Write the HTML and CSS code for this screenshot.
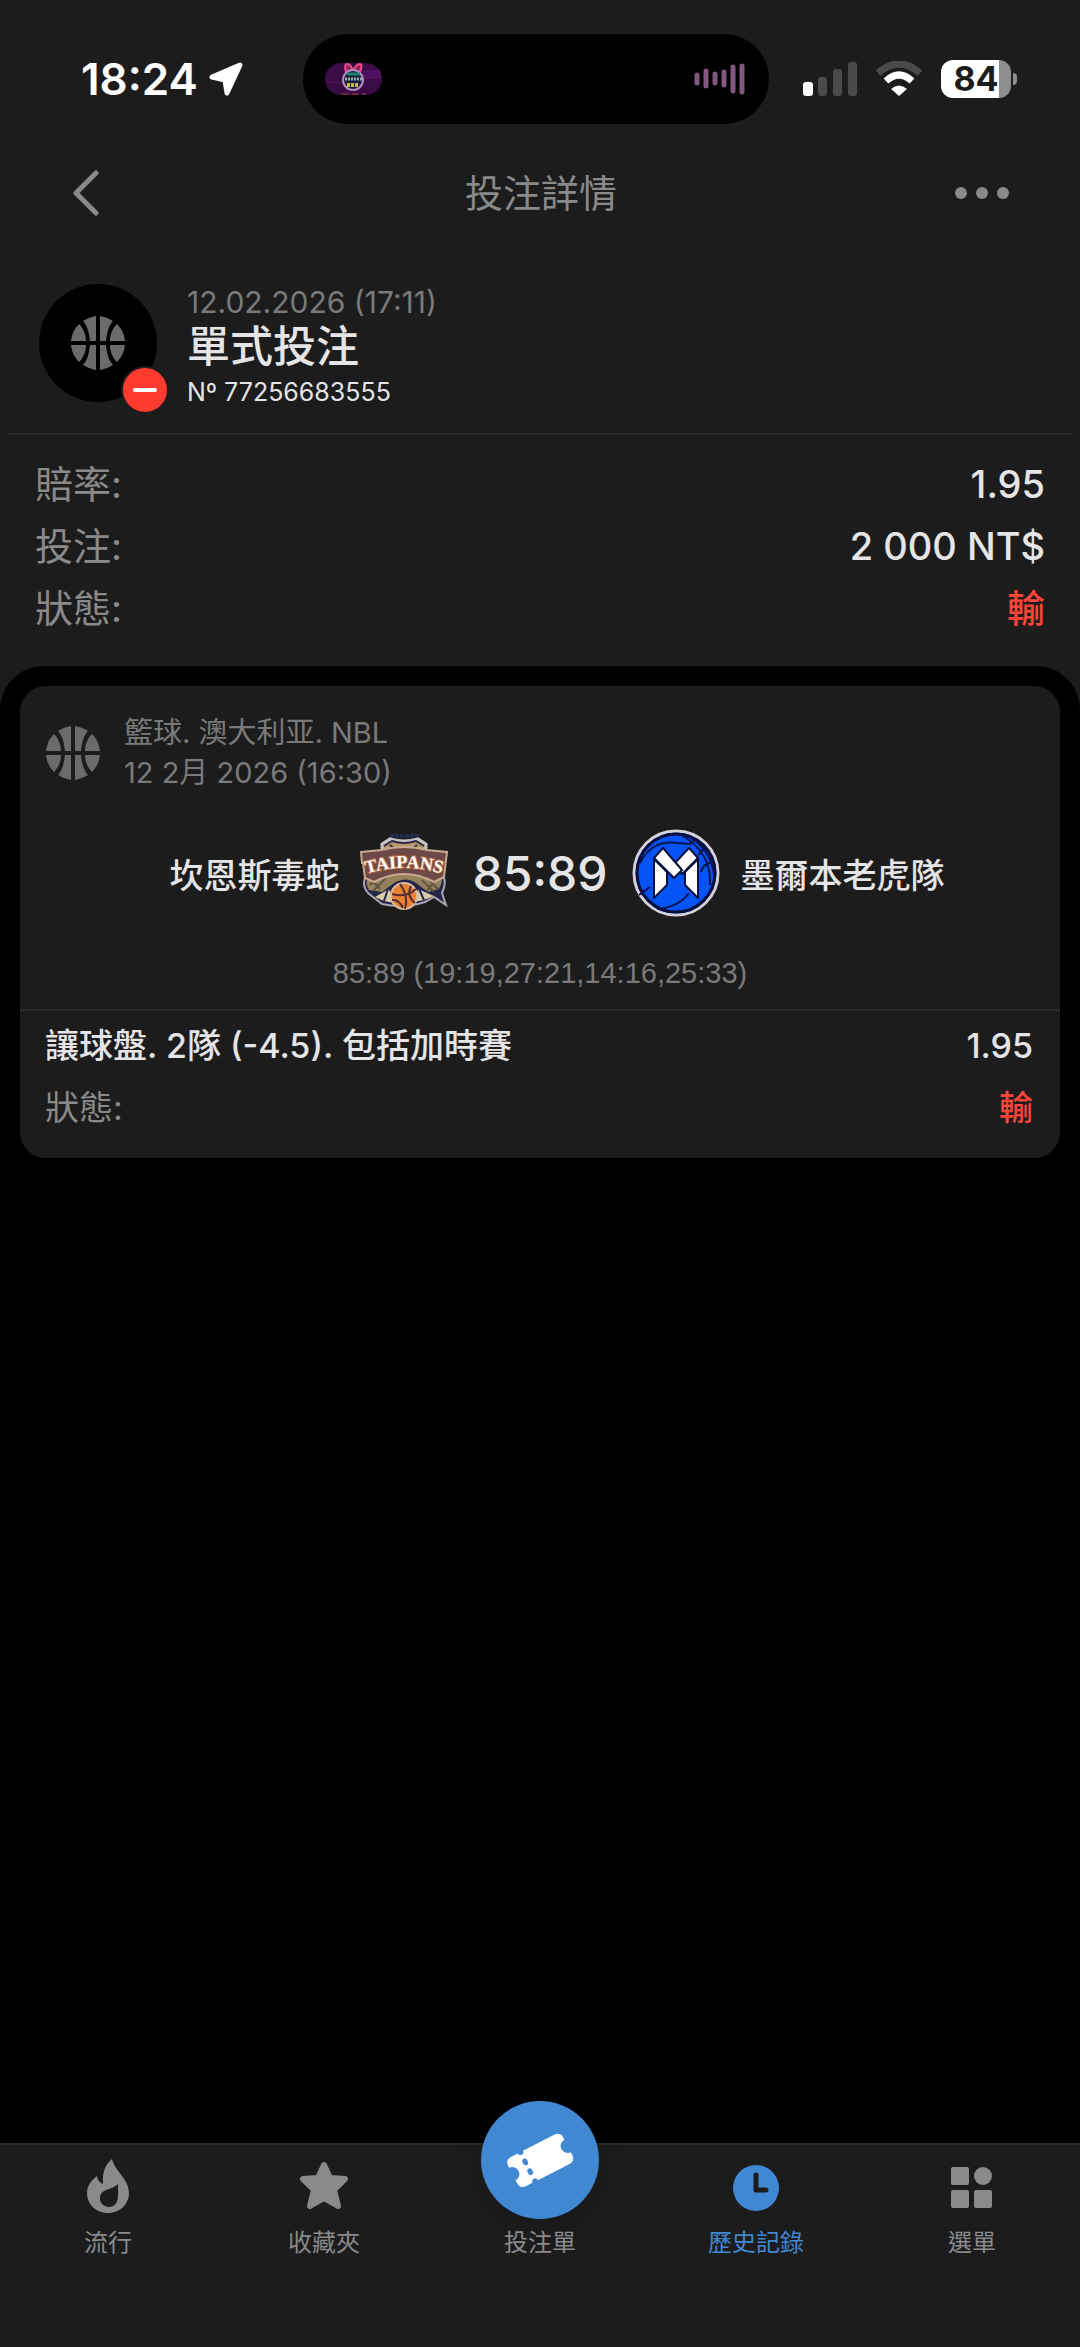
FILE: index.html
```html
<!DOCTYPE html>
<html lang="zh-Hant">
<head>
    <meta charset="UTF-8">
    <meta name="viewport" content="width=device-width, initial-scale=1">
    <title>投注詳情</title>
    <link rel="stylesheet" href="styles.css">
</head>

<body>
    <!-- 共用圖示 -->
    <svg class="sprite" aria-hidden="true">
        <symbol id="ball" viewBox="0 0 54 54">
            <path d="M25 0v25h-6C18 16 16 9 12 5Q18 1 25 0zM29 0v25h6C36 16 38 9 42 5Q36 1 29 0zM25 54V29h-6c-1 9-3 16-7 20q6 4 13 5zM29 54V29h6c1 9 3 16 7 20q-6 4-13 5zM8 8c4 4 7 10 7 17H0Q1 15 8 8zM46 8c-4 4-7 10-7 17h15Q53 15 46 8zM8 46c4-4 7-10 7-17H0q1 10 8 17zM46 46c-4-4-7-10-7-17h15q-1 10-8 17z" />
        </symbol>
    </svg>

    <!-- 狀態列 -->
    <div class="status">
        <div class="status-time">
            <span>18:24</span>
            <svg width="34" height="34" viewBox="0 0 34 34">
                <path d="M31 3 18 31 16 18 3 15z" fill="#fff" stroke="#fff" stroke-width="5" stroke-linejoin="round" />
            </svg>
        </div>
        <div class="island">
            <svg width="57" height="32" viewBox="0 0 57 32">
                <rect width="57" height="32" rx="16" fill="#3a0b45" />
                <path d="M2 19h17M38 8h17v7H40z" stroke="#5a176a" fill="#4d1060" />
                <path d="M21 9Q19 1 22 1q4 0 6 7 3-7 7-7 3 0 0 8z" fill="#8d2459" stroke="#f04b91" stroke-width="2" />
                <circle cx="28" cy="17" r="10" fill="#17202c" stroke="#b48ac5" stroke-width="2" />
                <path d="M22 11h13" stroke="#188478" stroke-width="3" />
                <path d="M20 16h17" stroke="#9ab0bd" stroke-width="3" stroke-dasharray="2 1" />
                <path d="M22 22h12" stroke="#c5bb35" stroke-width="4" stroke-dasharray="3 1" />
                <path d="M17 31h24" stroke="#9a4732" stroke-dasharray="7 3" />
            </svg>
            <svg width="51" height="32" viewBox="0 0 51 32">
                <path d="M3 12v8M12 8v15M21 11v9M30 9v13M39 4v24M48 3v26" stroke="#825681" stroke-width="5" stroke-linecap="round" />
            </svg>
        </div>
        <div class="status-icons">
            <svg width="54" height="36" viewBox="0 0 54 36">
                <rect y="21" width="10" height="14" rx="3" fill="#fff" />
                <rect x="15" y="16" width="9" height="19" rx="3" fill="#4a4a4a" />
                <rect x="30" y="8" width="9" height="27" rx="3" fill="#4a4a4a" />
                <rect x="45" y="1" width="9" height="34" rx="3" fill="#4a4a4a" />
            </svg>
            <svg width="48" height="36" viewBox="0 0 48 36" fill="none" stroke-width="7">
                <path d="M3 12Q24-6 45 12" stroke="#4a4a4a" />
                <path d="M11 20Q24 8 37 20" stroke="#fff" />
                <path d="M16 28q8-7 16 0l-8 7z" fill="#fff" stroke="none" />
            </svg>
            <div class="battery"><span>84</span></div>
        </div>
    </div>

    <header class="topbar">
        <button type="button" aria-label="返回">
            <svg width="26" height="46" viewBox="0 0 26 46">
                <path d="M23 3 3 23l20 20" fill="none" stroke="#8a8a8a" stroke-width="5" stroke-linecap="round" stroke-linejoin="round" />
            </svg>
        </button>
        <h1>投注詳情</h1>
        <button type="button" aria-label="更多">
            <svg width="54" height="12" viewBox="0 0 54 12" fill="#8a8a8a">
                <circle cx="6" cy="6" r="6" />
                <circle cx="27" cy="6" r="6" />
                <circle cx="48" cy="6" r="6" />
            </svg>
        </button>
    </header>

    <!-- 投注單摘要 -->
    <section class="bet">
        <div class="bet-icon">
            <svg class="ball" width="54" height="54"><use href="#ball" /></svg>
            <span class="badge"></span>
        </div>
        <div class="bet-text">
            <p class="bet-date">12.02.2026 (17:11)</p>
            <h2>單式投注</h2>
            <p class="bet-no">Nº 77256683555</p>
        </div>
    </section>
    <dl class="rows summary">
        <div><dt>賠率:</dt><dd>1.95</dd></div>
        <div><dt>投注:</dt><dd>2 000 NT$</dd></div>
        <div><dt>狀態:</dt><dd class="lost">輸</dd></div>
    </dl>

    <main>
        <article class="card">
            <div class="card-head">
                <svg class="ball" width="54" height="54"><use href="#ball" /></svg>
                <p>籃球. 澳大利亚. NBL<br>12 2月 2026 (16:30)</p>
            </div>
            <div class="match">
                <div class="team home">
                    <span>坎恩斯毒蛇</span>
                    <svg width="88" height="88" viewBox="0 0 88 88">
                        <path d="M30 7h30" stroke="#272b4b" stroke-width="4" stroke-dasharray="4 1" />
                        <!-- 蛇頭與蛇身 -->
                        <path d="M22 25V15l8-5q14 4 28 0l8 5v10l-8 12H30z" fill="#b79a69" stroke="#c9c3c8" stroke-width="3" />
                        <path d="M24 17l8-5q12 4 24 0l8 5M30 16q6 6 13 6 8 0 14-6M30 26l6-5M58 26l-6-5" fill="none" stroke="#28264a" stroke-width="2" />
                        <path d="M8 44q-8 10 0 20l14 11q22 5 43-2l9-5 12 8-4-12q6-12-1-20z" fill="#23244a" stroke="#aaa5ae" stroke-width="2" />
                        <path d="M9 46q-5 8 0 15l13 2 12-9q12-7 22 0l12 9 11-3q5-8 1-15z" fill="#96815d" />
                        <path d="M10 56l10-9M14 61l12-12M68 50l10 10M62 51l12 12M10 49l10 11M77 49 67 62" stroke="#5e513f" stroke-width="2" />
                        <path d="M15 68l14-8 5 14-10-2zM74 67l-16-7-4 13 10-2z" fill="#d9cba5" />
                        <path d="M24 72l4-12M64 71l-5-11" stroke="#23244a" stroke-width="2" />
                        <path d="M1 23l20-2q23-6 46 0l20 2-3 25-10 5q-30-16-60 0l-9-4-2-15H2z" fill="#6d4a48" stroke="#c9a98f" stroke-width="2" />
                        <path id="arch" d="M2 46Q44 32 86 46" fill="none" />
                        <text class="taipans"><textPath href="#arch" startOffset="50%">TAIPANS</textPath></text>
                        <circle cx="44" cy="67" r="13" fill="#e98135" stroke="#d8bda1" stroke-width="2" />
                        <path d="M32 65q14 4 24-5M40 55q9 12 5 25M51 57q-5 10 4 17M32 71q7-1 11 8" fill="none" stroke="#542c2c" stroke-width="2" />
                    </svg>
                </div>
                <strong class="score">85:89</strong>
                <div class="team">
                    <svg width="88" height="88" viewBox="0 0 88 88">
                        <circle cx="44" cy="44" r="42" fill="#0654f5" stroke="#d5d0da" stroke-width="3" />
                        <circle cx="44" cy="44" r="39" fill="none" stroke="#07103c" stroke-width="3" />
                        <g fill="none" stroke="#07134d" stroke-width="2">
                            <path d="M8 34Q20 10 46 14l12 1 6-5M48 5q32 18 30 51M57 7q22 15 25 38M7 66l11-8M25 80q22-2 32-16M69 43q2-8 11-10M66 26l8-8" />
                        </g>
                        <!-- 摺疊緞帶 -->
                        <g fill="#fff" stroke="#07103c" stroke-width="2" stroke-linejoin="round">
                            <path d="M22 30l13 13v13L22 69zM66 30 53 43v13l13 13z" />
                            <path d="M57 19l9 10-16 16-9-9z" />
                            <path d="M31 19l-9 10 20 20 8-8z" />
                        </g>
                    </svg>
                    <span>墨爾本老虎隊</span>
                </div>
            </div>
            <p class="periods">85:89 (19:19,27:21,14:16,25:33)</p>
            <dl class="rows pick">
                <div><dt class="pick-name">讓球盤. 2隊 (-4.5). 包括加時賽</dt><dd>1.95</dd></div>
                <div><dt>狀態:</dt><dd class="lost">輸</dd></div>
            </dl>
        </article>
    </main>

    <!-- 底部導覽 -->
    <nav class="tabs">
        <a href="#">
            <svg width="54" height="54" viewBox="0 0 54 54">
                <path fill-rule="evenodd" d="M31 0c2 11 17 20 17 34 0 11-9 20-21 20S6 45 6 34c0-8 5-13 10-17 1 4 2 6 6 8C21 12 25 5 31 0zM37 25c-7 7-18 4-18 15 0 4 4 8 9 8 11-1 9-12 9-23z" />
            </svg>
            <span>流行</span>
        </a>
        <a href="#">
            <svg width="54" height="54" viewBox="0 0 54 54">
                <path d="M27 6l6 13 15 1-11 11 4 16-14-8-14 8 4-16L6 20l15-1z" stroke="currentColor" stroke-width="6" stroke-linejoin="round" />
            </svg>
            <span>收藏夾</span>
        </a>
        <a href="#" class="slip">
            <span class="slip-icon">
                <svg width="70" height="60" viewBox="0 0 70 60">
                    <g transform="rotate(-27 35 30)">
                        <path d="M11 14h7q0 3 3 3t3-3h35q7 0 7 7v2a7 7 0 0 0 0 14v3q0 7-7 7H24q0-3-3-3t-3 3h-7q-7 0-7-7v-3a7 7 0 0 0 0-14v-2q0-7 7-7z" fill="#fff" />
                        <path d="M21 24v2M21 35v2" stroke="#4088d2" stroke-width="5" stroke-linecap="round" />
                    </g>
                </svg>
            </span>
            <span>投注單</span>
        </a>
        <a href="#" class="on">
            <svg width="54" height="54" viewBox="0 0 54 54">
                <circle cx="27" cy="29" r="23" />
                <path d="M27 16v15h10" fill="none" stroke="#1c1c1c" stroke-width="5" stroke-linecap="round" stroke-linejoin="round" />
            </svg>
            <span>歷史記錄</span>
        </a>
        <a href="#">
            <svg width="54" height="54" viewBox="0 0 54 54">
                <rect x="6" y="8" width="18" height="18" rx="2" />
                <circle cx="38" cy="17" r="9" />
                <rect x="6" y="31" width="18" height="18" rx="2" />
                <rect x="29" y="31" width="18" height="18" rx="2" />
            </svg>
            <span>選單</span>
        </a>
    </nav>
</body>
</html>
```

FILE: styles.css
```css
* {
    box-sizing: border-box;
}

body,
h1,
h2,
p,
dl,
dd {
    margin: 0;
}

body {
    display: flex;
    flex-direction: column;
    min-height: 100vh;
    background: #1c1c1c;
    color: #e5e5e7;
    font-family: Inter, "Noto Sans CJK TC", sans-serif;
}

svg {
    display: block;
    flex: none;
}

button {
    padding: 0;
    border: 0;
    background: none;
}

.sprite {
    position: absolute;
    width: 0;
    height: 0;
}

.ball {
    fill: #6b6b6d;
}

/* 狀態列 */
.status {
    display: grid;
    grid-template-columns: 1fr auto 1fr;
    align-items: center;
    height: 158px;
    padding: 0 62px 0 54px;
}

.status-time {
    display: flex;
    align-items: center;
    gap: 11px;
    padding-left: 27px;
    color: #fff;
    font-size: 44px;
    font-weight: 600;
}

.island {
    display: flex;
    align-items: center;
    justify-content: space-between;
    width: 466px;
    height: 90px;
    padding: 0 24px 0 22px;
    border-radius: 45px;
    background: #000;
}

.status-icons {
    display: flex;
    align-items: center;
    justify-content: flex-end;
    gap: 18px;
    padding-right: 7px;
}

.battery {
    position: relative;
    width: 70px;
    height: 38px;
    border-radius: 12px;
    background: linear-gradient(90deg, #fff 58px, #8e8e8e 58px);
    color: #1c1c1c;
    font-size: 34px;
    font-weight: 700;
    line-height: 38px;
    text-align: center;
}

/* 電池正極 */
.battery::after {
    content: "";
    position: absolute;
    top: 13px;
    right: -6px;
    width: 4px;
    height: 12px;
    border-radius: 0 4px 4px 0;
    background: #8e8e8e;
}

/* 標題列 */
.topbar {
    display: flex;
    align-items: center;
    justify-content: space-between;
    height: 70px;
    padding: 0 71px 0 73px;
}

.topbar button {
    display: flex;
    width: 54px;
}

.topbar h1 {
    color: #8a8a8a;
    font-size: 38px;
    font-weight: 400;
    line-height: 62px;
}

/* 投注單 */
.bet {
    display: flex;
    gap: 30px;
    margin: 0 8px;
    padding: 56px 31px 21px;
    border-bottom: 2px solid #2a2a2a;
}

.bet-icon {
    display: flex;
    position: relative;
    align-items: center;
    justify-content: center;
    width: 118px;
    height: 118px;
    border-radius: 50%;
    background: #000;
}

.badge {
    display: flex;
    position: absolute;
    right: -12px;
    bottom: -12px;
    align-items: center;
    justify-content: center;
    width: 48px;
    height: 48px;
    border: 2px solid #1c1c1c;
    border-radius: 50%;
    background: #ff3b30;
}

.badge::before {
    content: "";
    width: 24px;
    height: 4px;
    border-radius: 2px;
    background: #fff;
}

.bet-date {
    color: #7a7a7a;
    font-size: 30px;
    line-height: 36px;
}

.bet h2 {
    font-size: 43px;
    font-weight: 500;
    line-height: 52px;
}

.bet-no {
    font-size: 25px;
    line-height: 40px;
}

/* 左右對齊的資料列 */
.rows div {
    display: flex;
    justify-content: space-between;
    line-height: 62px;
}

.rows dt {
    color: #8a8a8a;
}

.rows dd {
    font-weight: 500;
}

.rows .lost {
    color: #ff453a;
}

.summary {
    padding: 18px 35px 27px;
    font-size: 38px;
}

/* 黑色內容區 */
main {
    flex: 1;
    padding: 20px;
    border-radius: 44px 44px 0 0;
    background: #000;
}

.card {
    padding: 27px 0 19px;
    border-radius: 26px;
    background: #1c1c1c;
}

.card-head {
    display: flex;
    align-items: center;
    gap: 24px;
    padding: 0 26px;
    color: #7a7a7a;
    font-size: 29px;
    line-height: 40px;
}

.match {
    display: grid;
    grid-template-columns: 1fr auto 1fr;
    gap: 25px;
    align-items: center;
    margin: 36px 0;
}

.team {
    display: flex;
    align-items: center;
    gap: 20px;
    font-size: 34px;
    font-weight: 500;
}

.home {
    justify-content: flex-end;
}

.score {
    font-size: 48px;
    font-weight: 500;
}

.taipans {
    fill: #fff;
    font: bold 18px "Liberation Serif", serif;
    paint-order: stroke;
    stroke: #b4683f;
    stroke-width: 2px;
    text-anchor: middle;
}

.periods {
    padding-bottom: 16px;
    border-bottom: 2px solid #2a2a2a;
    color: #7a7a7a;
    font: 29px/40px "Liberation Sans", sans-serif;
    text-align: center;
}

.pick {
    padding: 4px 27px 0 25px;
    font-size: 34px;
}

.pick .pick-name {
    color: #e5e5e7;
    font-weight: 500;
}

/* 底部導覽 */
.tabs {
    display: grid;
    grid-template-columns: repeat(5, 1fr);
    height: 204px;
    padding-top: 14px;
    border-top: 2px solid #2a2a2a;
    background: #1c1c1c;
}

.tabs a {
    display: flex;
    flex-direction: column;
    align-items: center;
    gap: 12px;
    color: #8a8a8d;
    font-size: 24px;
    line-height: 36px;
    text-decoration: none;
}

.tabs svg {
    fill: currentColor;
}

.tabs .on {
    color: #4088d2;
}

/* 凸出的圓形按鈕 */
.slip-icon {
    display: flex;
    align-items: center;
    justify-content: center;
    width: 118px;
    height: 118px;
    margin: -58px 0 -6px;
    border-radius: 50%;
    background: #4088d2;
    box-shadow: 0 6px 30px rgba(0, 0, 0, .15);
}
```
